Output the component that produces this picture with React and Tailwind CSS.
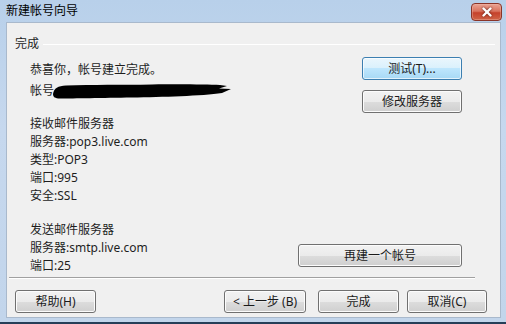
import { X } from "lucide-react";

const font = { fontFamily: '"Noto Sans", "Noto Sans CJK SC", sans-serif' };

function WinButton({ children, primary = false, className = "" }) {
  return (
    <div
      className={`h-[23px] rounded-[3px] border flex items-center justify-center text-[12px] text-[#1a1a1a] ${
        primary
          ? "border-[#3c7fb1] bg-[linear-gradient(#eaf6fd_0%,#d9f0fc_50%,#bee6fd_50%,#a7d9f5_100%)] shadow-[inset_0_0_0_1px_#ffffffaa]"
          : "border-[#707070] bg-[linear-gradient(#f2f2f2_0%,#ebebeb_50%,#dddddd_50%,#cfcfcf_100%)] shadow-[inset_0_0_0_1px_#fcfcfc]"
      } ${className}`}
    >
      {children}
    </div>
  );
}

function Line({ children, className = "" }) {
  return <div className={`h-[18px] leading-[18px] whitespace-nowrap ${className}`}>{children}</div>;
}

export default function App() {
  return (
    <div
      style={font}
      className="w-[506px] h-[324px] flex flex-col bg-[linear-gradient(#b8d0ea,#c6d8ee_40%,#c2d5eb)] border-b-[2px] border-[#263e58] overflow-hidden"
    >
      {/* Title bar */}
      <div className="h-[22px] flex items-center justify-between pl-[6px] pr-[4px]">
        <span className="text-[12px] text-black leading-none">新建帐号向导</span>
        <div className="w-[31px] h-[18px] mt-[1px] rounded-[4px] border border-[#8a3428] bg-[linear-gradient(#eba494_0%,#d9735e_45%,#c5412b_55%,#d06447_100%)] flex items-center justify-center shadow-[inset_0_0_0_1px_#f0b8aa66]">
          <X className="w-[14px] h-[14px] text-white drop-shadow-[0_0_1px_#5a1a10]" strokeWidth={4} />
        </div>
      </div>

      {/* Client area */}
      <div className="flex-1 ml-[6px] mr-[5px] mb-[4px] bg-[#f0f0f0] border border-[#a9b9cc] flex flex-col text-[12px] text-[#1e1e1e]">
        {/* Group title */}
        <div className="flex items-center mt-[12px] pl-[8px] pr-[5px] h-[18px]">
          <span className="leading-[18px]">完成</span>
          <div className="flex-1 ml-[4px] h-px bg-[#d5dfe5] border-b border-white" />
        </div>

        {/* Content */}
        <div className="flex h-[220px] mt-[4px]">
          <div className="flex-1 pl-[23px] pt-[4px] flex flex-col">
            <Line>恭喜你，帐号建立完成。</Line>
            <div className="flex items-center mt-[3px] h-[18px]">
              <span>帐号</span>
              <svg width="180" height="16" viewBox="0 0 180 16" className="-ml-[2px]">
                <path
                  d="M1 11 C2 5 6 3 14 2.5 C40 1.5 70 2 100 1.5 C130 1 155 1.5 168 2 L175 3 L167 5.5 L179 6 L170 10 C150 13 110 14 80 14.5 C50 15 22 15.5 8 15.5 C3 15.5 1 14 1 11 Z"
                  fill="#000"
                />
              </svg>
            </div>
            <Line className="mt-[15px]">接收邮件服务器</Line>
            <Line>服务器:pop3.live.com</Line>
            <Line>类型:POP3</Line>
            <Line>端口:995</Line>
            <Line>安全:SSL</Line>
            <Line className="mt-[16px]">发送邮件服务器</Line>
            <Line>服务器:smtp.live.com</Line>
            <Line>端口:25</Line>
          </div>
          <div className="w-[164px] mr-[38px] flex flex-col items-end">
            <WinButton primary className="w-[100px]">测试(T)...</WinButton>
            <WinButton className="w-[100px] mt-[10px]">修改服务器</WinButton>
            <WinButton className="w-[164px] mt-[131px]">再建一个帐号</WinButton>
          </div>
        </div>

        {/* Separator */}
        <div className="ml-[2px] w-[466px] h-px bg-[#a0a0a0] border-b border-white box-content" />

        {/* Bottom buttons */}
        <div className="flex items-center mt-[11px] pl-[8px]">
          <WinButton className="w-[81px]">帮助(H)</WinButton>
          <div className="flex-1" />
          <WinButton className="w-[82px]">&lt; 上一步 (B)</WinButton>
          <WinButton className="w-[81px] ml-[12px]">完成</WinButton>
          <WinButton className="w-[80px] ml-[8px] mr-[13px]">取消(C)</WinButton>
        </div>
      </div>
    </div>
  );
}
